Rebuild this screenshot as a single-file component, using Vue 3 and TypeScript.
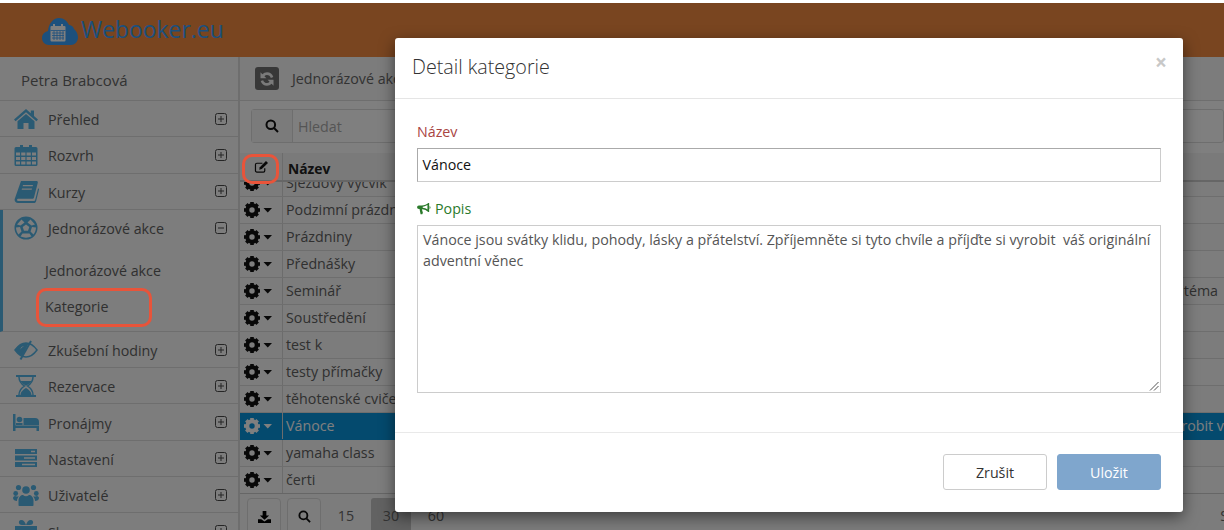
<script setup lang="ts">
interface NavItem { label: string; icon: string; open?: boolean }
const nav: NavItem[] = [
  { label: 'Přehled', icon: 'home' },
  { label: 'Rozvrh', icon: 'calendar' },
  { label: 'Kurzy', icon: 'book' },
  { label: 'Jednorázové akce', icon: 'ball', open: true },
  { label: 'Zkušební hodiny', icon: 'eye' },
  { label: 'Rezervace', icon: 'hourglass' },
  { label: 'Pronájmy', icon: 'bed' },
  { label: 'Nastavení', icon: 'server' },
  { label: 'Uživatelé', icon: 'users' },
  { label: 'Slevy', icon: 'gift' },
]
const rows = [
  { name: 'Sjezdový výcvik', right: '' },
  { name: 'Podzimní prázdniny', right: '' },
  { name: 'Prázdniny', right: '' },
  { name: 'Přednášky', right: '' },
  { name: 'Seminář', right: 'téma' },
  { name: 'Soustředění', right: '' },
  { name: 'test k', right: '' },
  { name: 'testy přímačky', right: '' },
  { name: 'těhotenské cvičení', right: '' },
  { name: 'Vánoce', right: 'vyrobit v', active: true },
  { name: 'yamaha class', right: '' },
  { name: 'čerti', right: '' },
]
const gearTeeth = [0, 45, 90, 135, 180, 225, 270, 315]
</script>

<template>
  <div class="app">
    <div class="topline"></div>
    <header class="brand">
      <svg class="logo" viewBox="0 0 36 27" width="36" height="27">
        <path class="logo-cloud" d="M7 27C3 27 0 24 0 20c0-3.500 2.500-6 6-7C6.500 6 11 0 17 0c5 0 8 3 10 7 2 0 4 1 5 4 2.500 2 4 5 4 8.500 0 4.500-3.500 7.500-7 7.500z" />
        <rect class="logo-cal" x="8.500" y="8" width="15" height="15.500" rx="1" />
        <path class="logo-grid" d="M8.500 12.500h15M10 15h12M10 17.500h12M10 20h12M12 13v9M15 13v9M18 13v9M21 13v9" />
        <path class="logo-ring" d="M12 6v4M20 6v4" />
      </svg>
      <span class="brand-name">Webooker.eu</span>
    </header>

    <div class="layout">
      <aside class="sidebar">
        <div class="user">Petra Brabcová</div>
        <template v-for="item in nav" :key="item.label">
          <div class="nav" :class="{ open: item.open }">
            <div class="nav-row">
              <svg class="nav-icon" viewBox="0 0 26 24" width="26" height="24">
                <g v-if="item.icon === 'home'">
                  <path d="M13 2 1 12.500l1.600 1.700L13 5.200l10.400 9 1.600-1.700-4-3.500V3.500h-3.200v2.800z" />
                  <path d="M13 7 4.500 14.300V22h6v-6h5v6h6v-7.700z" />
                </g>
                <g v-else-if="item.icon === 'calendar'">
                  <path fill-rule="evenodd" d="M3 4h4V2h3v2h6V2h3v2h4a1.500 1.500 0 0 1 1.500 1.500v16A1.500 1.500 0 0 1 23 23H3a1.500 1.500 0 0 1-1.500-1.500v-16A1.500 1.500 0 0 1 3 4zm0 5.500v3h4v-3zm5.200 0v3h4.200v-3zm5.400 0v3h4.200v-3zm5.400 0v3h4v-3zM3 14v3h4v-3zm5.200 0v3h4.200v-3zm5.400 0v3h4.200v-3zm5.400 0v3h4v-3zM3 18.400v3h4v-3zm5.200 0v3h4.200v-3zm5.400 0v3h4.200v-3zm5.400 0v3h4v-3z" />
                </g>
                <g v-else-if="item.icon === 'book'">
                  <path fill-rule="evenodd" d="M8 2h15.500c1 0 1.500.8 1.300 1.700L21 18.500c-.2.800-.8 1.300-1.700 1.300H6c-1.500 0-2 .5-2 1.100 0 .7.800 1.100 2 1.100h15c.5 0 1-.4 1.100-.8l3-12 1 1-3 12c-.3 1-1 1.800-2 1.800H5c-2.300 0-3.800-2-3.300-4zm2 4-.3 1.300h10l.3-1.300zm-1 3.500-.3 1.300h10l.3-1.300z" />
                </g>
                <g v-else-if="item.icon === 'ball'">
                  <path fill-rule="evenodd" d="M13 .5a11.500 11.500 0 1 1 0 23 11.500 11.500 0 1 1 0-23zM13 8.500l3.300 2.400L15 14.800h-4l-1.300-3.900zM8.500 3.500l3 3-4 3L4 8.500zM17.500 3.500l-3 3 4 3L22 8.500zM3 11.500l4-.5 1.500 4.500-3 3C4 16.500 3 14 3 11.500zM23 11.500l-4-.5-1.500 4.500 3 3c1.500-2 2.500-4.500 2.500-7zM9.500 17.500h7l2 3c-3.500 1.500-7.500 1.500-11 0z" />
                </g>
                <g v-else-if="item.icon === 'eye'">
                  <path class="eye-line" d="M2 12C6 6.500 9.500 5 13 5s7 1.500 11 7c-4 5.500-7.500 7-11 7S6 17.500 2 12z" />
                  <path d="M2 12C6 6.500 9.500 5 13 5l2.500.4L9.500 17.800C6.500 16.800 4.500 15.500 2 12zm5.500-.5c.8-1.800 2-2.700 3.600-3.300-1.500-.2-3.500.8-3.600 3.300z" fill-rule="evenodd" />
                  <path class="eye-slash" d="M7.500 21.500 18 3" />
                </g>
                <g v-else-if="item.icon === 'hourglass'">
                  <path d="M3 1h20v2H3zM3 21h20v2H3z" />
                  <path class="eye-line" d="M6 3c0 5 2.500 7 5.500 9C8.500 14 6 16 6 21M20 3c0 5-2.500 7-5.500 9 3 2 5.500 4 5.500 9" />
                  <path d="M7.500 7h11c-1 2.300-3.500 3.500-5.500 4.700C11 10.500 8.500 9.300 7.500 7zM7.500 21c0-3 3-5.500 5.500-7 2.500 1.500 5.500 4 5.500 7z" />
                </g>
                <g v-else-if="item.icon === 'bed'">
                  <path d="M0 4h2.500v11.500H26V21h-2.500v-3H2.500v3H0z" />
                  <circle cx="6.500" cy="9.500" r="2.800" />
                  <path d="M10.500 8H22a4 4 0 0 1 4 4v3H10.500zM3 13h6.500v2H3z" />
                </g>
                <g v-else-if="item.icon === 'server'">
                  <path fill-rule="evenodd" d="M2 3h22v5H2zm16 1.700v1.500h4V4.700zM2 9.500h22v5H2zm9 1.700v1.500h11v-1.500zM2 16h22v5H2zm7 1.800v1.500h13v-1.500z" />
                </g>
                <g v-else-if="item.icon === 'users'">
                  <circle cx="13" cy="7" r="3.800" /><circle cx="5.500" cy="4.500" r="2.600" /><circle cx="20.500" cy="4.500" r="2.600" />
                  <circle cx="2.700" cy="10.500" r="2.400" /><circle cx="23.300" cy="10.500" r="2.400" />
                  <path d="M6.500 23c-.8 0-1-.5-1-1v-4.500c0-3.500 2.500-5.500 4.500-5.500 1 .8 2 1.200 3 1.200s2-.4 3-1.200c2 0 4.500 2 4.500 5.500V22c0 .5-.2 1-1 1zM0 15c0-1 1-2 2-2 1 .5 2 .5 4 .5-1.500 1.200-2 3-2 4.500-2 0-4-1-4-3zM26 15c0-1-1-2-2-2-1 .5-2 .5-4 .5 1.500 1.200 2 3 2 4.500 2 0 4-1 4-3z" />
                </g>
                <g v-else>
                  <path d="M2 7h22v5H2zM4 13h18v9H4zM8 1c3 0 4 2 5 5 1-3 2-5 5-5 3 0 3 5-1 5H9C5 6 5 1 8 1z" />
                </g>
              </svg>
              <span class="nav-label">{{ item.label }}</span>
              <svg class="toggle" viewBox="0 0 12 12" width="12" height="12">
                <rect x=".5" y=".5" width="11" height="11" rx="2" />
                <path d="M3 6h6" />
                <path v-if="!item.open" d="M6 3v6" />
              </svg>
            </div>
            <div v-if="item.open" class="subnav">
              <div class="sub-item">Jednorázové akce</div>
              <div class="sub-item">Kategorie</div>
            </div>
          </div>
        </template>
      </aside>

      <main class="content">
        <div class="titlebar">
          <span class="refresh">
            <svg viewBox="0 0 16 16" width="18" height="18">
              <path d="M13.600 6.200C12.900 3.700 10.700 2 8 2 6.400 2 5 2.700 3.900 3.700L2.200 2v5.300h5.300L5.700 5.500C6.300 4.800 7.100 4.400 8 4.400c1.600 0 3 1.100 3.400 2.600zM2.400 9.800C3.100 12.300 5.300 14 8 14c1.600 0 3-.7 4.100-1.700l1.700 1.700V8.700H8.500l1.800 1.800c-.6.700-1.400 1.100-2.300 1.100-1.600 0-3-1.100-3.400-2.600z" />
            </svg>
          </span>
          <span class="title-text">Jednorázové akce</span>
        </div>

        <div class="searchbar">
          <span class="search-btn">
            <svg viewBox="0 0 14 14" width="14" height="14" class="search-svg">
              <circle cx="5.800" cy="5.800" r="4.300" /><path d="M9 9l4 4" />
            </svg>
          </span>
          <span class="search-input">Hledat</span>
        </div>

        <div class="thead">
          <span class="cell-action head-action">
            <svg viewBox="0 0 16 14" width="15" height="13" class="edit-svg">
              <path class="edit-box" d="M11.500 9v2.500a1.500 1.500 0 0 1-1.500 1.500H3a1.500 1.500 0 0 1-1.500-1.500V5A1.500 1.500 0 0 1 3 3.500h6" />
              <path class="edit-pen" d="M5.500 10.500l.7-2.800L12.800 1l2.200 2.200-6.700 6.600z" />
            </svg>
          </span>
          <span class="cell-name head-name">Název</span>
        </div>

        <div class="tbody">
          <div v-for="row in rows" :key="row.name" class="tr" :class="{ active: row.active }">
            <span class="cell-action gear-cell">
              <svg viewBox="0 0 30 16" width="30" height="16" class="gear">
                <g transform="translate(8 8)">
                  <rect v-for="a in gearTeeth" :key="a" x="-1.800" y="-8" width="3.600" height="4" :transform="`rotate(${a})`" />
                  <circle r="4.700" class="gear-ring" />
                </g>
                <path d="M19.500 6h8.500l-4.250 4.500z" />
              </svg>
            </span>
            <span class="cell-name">{{ row.name }}</span>
            <span class="cell-right">{{ row.right }}</span>
          </div>
        </div>

        <div class="pager">
          <span class="pg-btn">
            <svg viewBox="0 0 14 14" width="13" height="13"><path d="M5 1h4v5h3L7 10.500 2 6h3zM0 10h3.500L7 12.500 10.500 10H14v4H0z" /></svg>
          </span>
          <span class="pg-btn">
            <svg viewBox="0 0 14 14" width="13" height="13" class="search-svg"><circle cx="5.800" cy="5.800" r="4.300" /><path d="M9 9l4 4" /></svg>
          </span>
          <div class="pg-nums">
            <span class="pg-num">15</span>
            <span class="pg-num current">30</span>
            <span class="pg-num">60</span>
          </div>
          <span class="pg-end">S</span>
        </div>
      </main>
    </div>

    <div class="backdrop"></div>

    <span class="mark mark-edit"></span>
    <span class="mark mark-cat"></span>

    <section class="modal">
      <div class="modal-head">
        <h4 class="modal-title">Detail kategorie</h4>
        <span class="close">×</span>
      </div>
      <div class="modal-body">
        <label class="lbl lbl-red">Název</label>
        <div class="field">Vánoce</div>
        <label class="lbl lbl-green">
          <svg viewBox="0 0 16 14" width="14" height="12">
            <path d="M13 0h1v10.500h-1C11 8.500 8.500 7.500 5.500 7.200l1.200 4.300-.7 1.500H4L2.800 7H2a2 2 0 0 1 0-4.200h3.500C8.500 2.800 11 2 13 0zm-1 2.300c-1.500 1-3.500 1.800-5.500 2v1.300c2 .2 4 1 5.500 2z" fill-rule="evenodd" />
            <path d="M14.500 3.500a2 2 0 0 1 0 3.500z" />
          </svg>
          Popis
        </label>
        <div class="area">
          Vánoce jsou svátky klidu, pohody, lásky a přátelství. Zpříjemněte si tyto chvíle a příjďte si vyrobit&nbsp; váš originální adventní věnec
          <svg class="grip" viewBox="0 0 10 10" width="10" height="10"><path d="M9.500 1 1 9.500M9.500 5 5 9.500" /></svg>
        </div>
      </div>
      <div class="modal-foot">
        <button class="btn btn-cancel" type="button">Zrušit</button>
        <button class="btn btn-save" type="button">Uložit</button>
      </div>
    </section>
  </div>
</template>

<style scoped>
.app {
  position: relative;
  width: 1224px;
  height: 530px;
  overflow: hidden;
  background: #f8f8f8;
  font-family: "Open Sans", "Noto Sans", sans-serif;
  font-size: 14.250px;
  color: #5e5e5e;
}
.topline { height: 3px; background: #fff; }
.brand {
  height: 54px;
  background: #f28a40;
  display: flex;
  align-items: center;
  padding-left: 42px;
  gap: 3px;
  box-sizing: border-box;
}
.logo { position: relative; top: 1px; }
.logo-cloud { fill: #38a0fa; }
.logo-cal { fill: #fff; }
.logo-grid { stroke: #38a0fa; stroke-width: .8; fill: none; }
.logo-ring { stroke: #fff; stroke-width: 2; fill: none; }
.brand-name { font-size: 22.900px; color: #38a0fa; position: relative; top: -1px; }
.layout { display: flex; height: 473px; }

.sidebar { width: 238px; flex: none; background: #fafafa; border-right: 2px solid #ddd; }
.user {
  height: 44px;
  line-height: 46px;
  padding-left: 21px;
  font-size: 15px;
  border-bottom: 1px solid #dcdcdc;
  box-sizing: border-box;
  color: #666;
}
.nav { border-bottom: 1px solid #dcdcdc; box-sizing: border-box; }
.nav.open { border-left: 3px solid #55b5e6; }
.nav-row { height: 35.300px; display: flex; align-items: center; padding-left: 13px; padding-right: 11px; }
.nav.open .nav-row { padding-left: 10px; }
.nav-icon { fill: #55b5e6; flex: none; }
.eye-line { fill: none; stroke: #55b5e6; stroke-width: 1.500; }
.eye-slash { fill: none; stroke: #55b5e6; stroke-width: 2; }
.nav-label { margin-left: 9px; flex: 1; font-size: 14.250px; color: #616161; position: relative; top: 1px; }
.toggle { fill: none; stroke: #4b4b4b; stroke-width: 1; flex: none; }
.subnav { padding: 8px 0 0 42px; height: 85.700px; box-sizing: border-box; }
.sub-item { height: 35.500px; line-height: 35.500px; font-size: 14.250px; color: #616161; }

.content { flex: 1; min-width: 0; background: #fff; display: flex; flex-direction: column; }
.titlebar {
  height: 44px;
  display: flex;
  align-items: center;
  gap: 13px;
  padding-left: 15px;
  background: #f8f8f8;
  border-bottom: 1px solid #dcdcdc;
  box-sizing: border-box;
  flex: none;
}
.refresh {
  width: 24px;
  height: 23px;
  background: #707070;
  border-radius: 3px;
  display: flex;
  align-items: center;
  justify-content: center;
  fill: #f4f4f4;
}
.title-text { font-size: 14.250px; color: #666; }
.searchbar {
  margin: 8px 0 0 11px;
  height: 34px;
  display: flex;
  border: 1px solid #ddd;
  border-radius: 3px;
  box-sizing: border-box;
  background: #fff;
  flex: none;
}
.search-btn {
  width: 40px;
  display: flex;
  align-items: center;
  justify-content: center;
  background: #f6f6f6;
  border-right: 1px solid #ddd;
  flex: none;
}
.search-svg { fill: none; stroke: #111; stroke-width: 2; }
.search-input { padding-left: 5px; line-height: 34px; color: #aaa; font-size: 14.250px; }
.thead {
  margin-top: 10px;
  height: 29px;
  display: flex;
  align-items: center;
  background: #f4f4f4;
  border-bottom: 2px solid #ccc;
  box-sizing: border-box;
  flex: none;
}
.cell-action {
  width: 42px;
  flex: none;
  height: 100%;
  display: flex;
  align-items: center;
  justify-content: center;
  border-right: 1px solid #d8d8d8;
  box-sizing: content-box;
}
.gear-cell { justify-content: flex-start; padding-left: 4px; width: 38px; }
.cell-name { flex: 1; min-width: 0; padding-left: 3px; white-space: nowrap; overflow: hidden; line-height: 26px; }
.head-name { padding-left: 5px; font-weight: 700; color: #222; font-size: 13.800px; position: relative; top: 2px; }
.edit-box { fill: none; stroke: #111; stroke-width: 1.300; }
.edit-pen { fill: #111; }
.tbody { height: 311px; overflow: hidden; flex: none; }
.tr {
  height: 27px;
  display: flex;
  align-items: center;
  border-bottom: 1px solid #ddd;
  box-sizing: border-box;
  background: #f8f8f8;
  font-size: 14.250px;
  color: #606060;
}
.tr:first-child { margin-top: -12px; }
.tr:nth-child(even) { background: #fbfbfb; }
.tr.active { background: #0894dc; color: #fff; border-bottom-color: #0894dc; }
.gear { fill: #111; }
.gear-ring { fill: none; stroke: #111; stroke-width: 4; }
.tr.active .gear { fill: #fff; }
.tr.active .gear-ring { stroke: #fff; }
.cell-right { width: 120px; flex: none; display: flex; justify-content: flex-end; white-space: nowrap; overflow: hidden; padding-right: 6px; line-height: 26px; }
.tr.active .cell-right { padding-right: 0; }
.pager { flex: 1; display: flex; align-items: flex-start; padding: 4px 0 0 7px; gap: 6px; border-top: 1px solid #ccc; background: #f8f8f8; }
.pg-btn {
  width: 34px;
  height: 36px;
  border: 1px solid #ddd;
  border-radius: 4px;
  box-sizing: border-box;
  display: flex;
  align-items: center;
  justify-content: center;
  background: #fafafa;
  flex: none;
}
.pg-nums { display: flex; gap: 5px; margin-left: -1px; }
.pg-num { width: 40px; text-align: center; line-height: 36px; font-size: 14.250px; height: 36px; color: #666; }
.pg-num.current { background: #c4c4c4; border-radius: 3px; }
.pg-end { margin-left: auto; line-height: 36px; color: #666; margin-right: -4px; }

.backdrop { position: absolute; inset: 3px 0 0 0; background: rgba(0, 0, 0, .5); }
.mark { position: absolute; border: 3px solid #e8543a; box-sizing: border-box; }
.mark-edit { left: 242px; top: 154px; width: 37px; height: 30px; border-radius: 10px; }
.mark-cat { left: 36px; top: 288px; width: 116px; height: 39px; border-radius: 10px; }

.modal {
  position: absolute;
  left: 395px;
  top: 38px;
  width: 788px;
  height: 474px;
  background: #fff;
  border-radius: 3px;
  box-shadow: 0 5px 15px rgba(0, 0, 0, .5);
  display: flex;
  flex-direction: column;
}
.modal-head {
  height: 61px;
  border-bottom: 1px solid #e5e5e5;
  display: flex;
  align-items: center;
  justify-content: space-between;
  padding: 0 16px 0 17px;
  box-sizing: border-box;
  flex: none;
}
.modal-title { margin: 0; font-size: 19.700px; font-weight: 300; color: #333; line-height: 1.400; position: relative; top: -1px; }
.close { font-size: 21px; font-weight: 700; color: #c8c8c8; line-height: 1; position: relative; top: -6px; }
.modal-body { height: 334px; padding: 23px 22px 0; box-sizing: border-box; border-bottom: 1px solid #e9e9e9; flex: none; }
.lbl { display: flex; align-items: center; gap: 4px; font-size: 14.250px; line-height: 20px; }
.lbl-red { color: #a94442; margin-bottom: 6px; }
.lbl-green { color: #2b7a2b; margin-bottom: 6px; fill: #2b7a2b; }
.field {
  height: 34px;
  border: 1.500px solid #ccc;
  border-top-color: #aaa;
  border-left-color: #aaa;
  box-sizing: border-box;
  padding-left: 4.500px;
  line-height: 31px;
  color: #111;
  margin-bottom: 17px;
  font-size: 14.250px;
}
.area {
  position: relative;
  height: 168px;
  border: 1px solid #ccc;
  box-sizing: border-box;
  padding: 4px 5px;
  font-size: 14.250px;
  line-height: 20.500px;
  color: #555;
}
.grip { position: absolute; right: 1px; bottom: 1px; fill: none; stroke: #555; stroke-width: 1; }
.modal-foot { flex: 1; display: flex; justify-content: flex-end; gap: 10px; padding: 21px 22px 0; box-sizing: border-box; }
.btn {
  width: 104px;
  height: 36px;
  border-radius: 3px;
  font-family: inherit;
  font-size: 14.250px;
  cursor: default;
}
.btn-cancel { background: #fff; border: 1px solid #ccc; color: #333; }
.btn-save { background: #7fa6cd; border: 1px solid #7fa6cd; color: #fff; }
</style>
